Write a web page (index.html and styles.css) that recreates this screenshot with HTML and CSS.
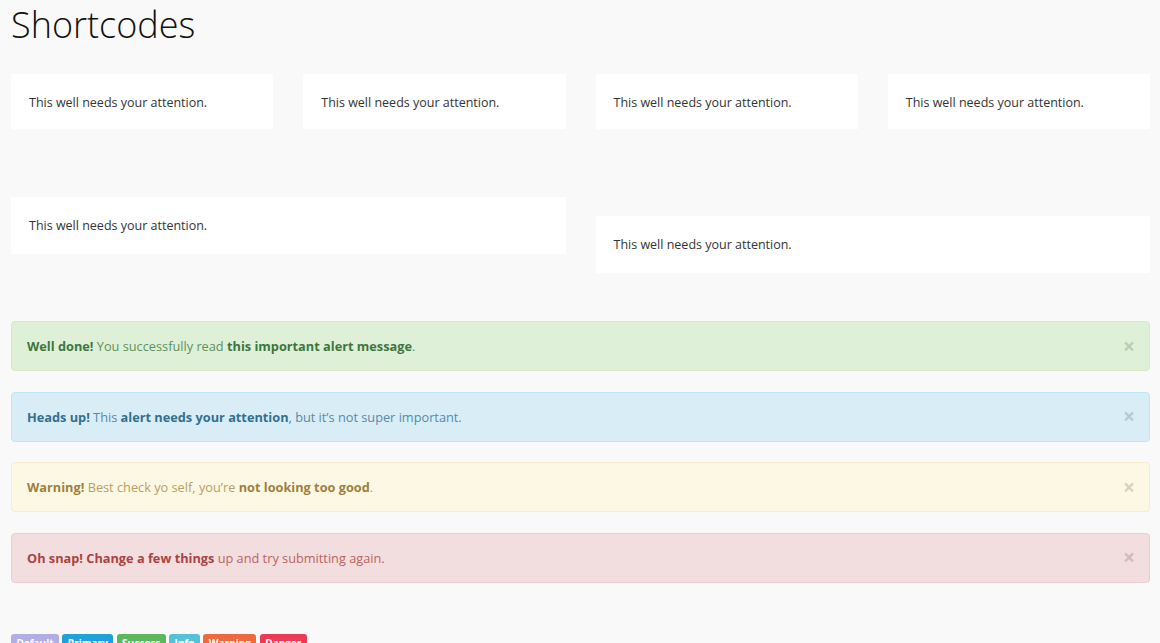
FILE: index.html
```html
<!DOCTYPE html>
<html lang="en">
<head>
<meta charset="utf-8">
<title>Shortcodes</title>
<link rel="stylesheet" href="styles.css">
</head>
<body>
<main class="page">
  <h1 class="title">Shortcodes</h1>

  <div class="wells wells-4">
    <div class="well">This well needs your attention.</div>
    <div class="well">This well needs your attention.</div>
    <div class="well">This well needs your attention.</div>
    <div class="well">This well needs your attention.</div>
  </div>

  <div class="wells wells-2">
    <div class="well">This well needs your attention.</div>
    <div class="well well-offset">This well needs your attention.</div>
  </div>

  <div class="alerts">
    <div class="alert alert-success"><span class="alert-text"><strong>Well done!</strong> You successfully read <strong>this important alert message</strong>.</span><span class="close">×</span></div>
    <div class="alert alert-info"><span class="alert-text"><strong>Heads up!</strong> This <strong>alert needs your attention</strong>, but it’s not super important.</span><span class="close">×</span></div>
    <div class="alert alert-warning"><span class="alert-text"><strong>Warning!</strong> Best check yo self, you’re <strong>not looking too good</strong>.</span><span class="close">×</span></div>
    <div class="alert alert-danger"><span class="alert-text"><strong>Oh snap! Change a few things</strong> up and try submitting again.</span><span class="close">×</span></div>
  </div>

  <div class="labels">
    <span class="label label-default">Default</span>
    <span class="label label-primary">Primary</span>
    <span class="label label-success">Success</span>
    <span class="label label-info">Info</span>
    <span class="label label-warning">Warning</span>
    <span class="label label-danger">Danger</span>
  </div>
</main>
</body>
</html>
```

FILE: styles.css
```css
* { box-sizing: border-box; }

html, body {
  margin: 0;
  padding: 0;
  background: #f9f9f9;
}

body {
  font-family: "Open Sans", "Liberation Sans", sans-serif;
  font-size: 13px;
  color: #333;
}

.page {
  padding: 0 10px 0 11px;
}

.title {
  margin: 4px 0 28px;
  font-size: 36px;
  line-height: 42px;
  font-weight: 300;
  color: #111;
}

.wells {
  display: grid;
  column-gap: 30px;
  align-items: start;
}

.wells-4 {
  grid-template-columns: repeat(4, 1fr);
  margin-bottom: 68px;
}

.wells-2 {
  grid-template-columns: repeat(2, 1fr);
  margin-bottom: 48px;
}

.well {
  background: #fff;
  padding: 20px 18px 18px;
  font-size: 12.5px;
  line-height: 17px;
  color: #333;
}

.wells-2 .well {
  padding: 20px 18px;
}

.well-offset {
  margin-top: 19px;
}

.alerts {
  display: flex;
  flex-direction: column;
  gap: 20.5px;
}

.alert {
  display: flex;
  justify-content: space-between;
  align-items: center;
  height: 50px;
  padding: 0 16px 0 15px;
  border: 1px solid transparent;
  border-radius: 4px;
  font-size: 12.75px;
  line-height: 18px;
}

.alert-text {
  font-weight: 400;
}

.alert strong {
  font-weight: 700;
}

.close {
  font-size: 21px;
  font-weight: 700;
  line-height: 1;
  color: #000;
  opacity: 0.15;
  margin-right: -2px;
}

.alert-success {
  background: #dff0d8;
  border-color: #d6e9c6;
  color: #3c763d;
}
.alert-success .alert-text { color: #5e9258; }
.alert-success strong { color: #3c763d; }

.alert-info {
  background: #d9edf7;
  border-color: #bce8f1;
  color: #31708f;
}
.alert-info .alert-text { color: #538aab; }
.alert-info strong { color: #31708f; }

.alert-warning {
  background: #fcf8e3;
  border-color: #faebcc;
  color: #a07f40;
}
.alert-warning .alert-text { color: #bb9d66; }
.alert-warning strong { color: #a07f40; }

.alert-danger {
  background: #f2dede;
  border-color: #ebccd1;
  color: #a94442;
}
.alert-danger .alert-text { color: #b96463; }
.alert-danger strong { color: #a94442; }

.labels {
  margin-top: 51px;
  display: flex;
  gap: 3.5px;
}

.label {
  display: inline-block;
  padding: 3px 5.4px 4px;
  font-size: 10px;
  font-weight: 700;
  line-height: 13px;
  color: #fff;
  border-radius: 3px;
}

.label-default { background: #b3ade6; }
.label-primary { background: #21a1db; }
.label-success { background: #5cb85c; }
.label-info { background: #53c1d7; }
.label-warning { background: #ec6a3c; }
.label-danger { background: #ea3a55; }
```
